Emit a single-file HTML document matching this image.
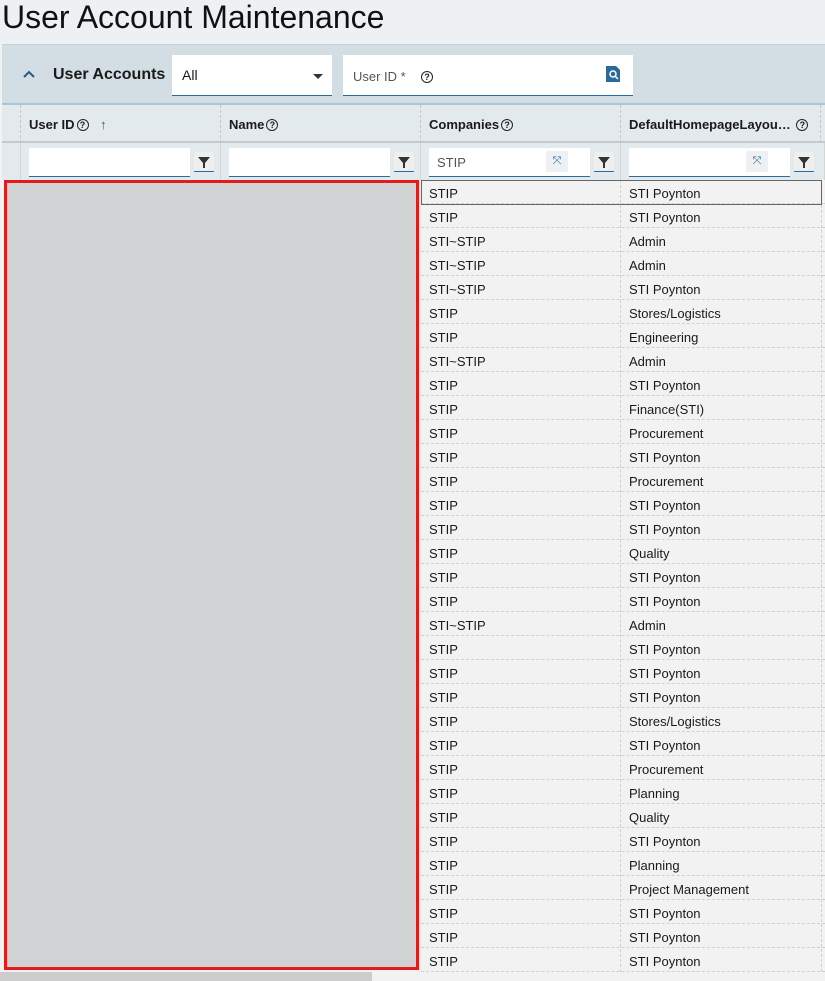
<!DOCTYPE html>
<html><head><style>
*{box-sizing:border-box;margin:0;padding:0}
body{width:825px;height:981px;overflow:hidden;background:#f2f2f2;font-family:"Liberation Sans",sans-serif;color:#1a1a1a;position:relative}
.abs{position:absolute}
.title{left:2px;top:-1px;font-size:32px;color:#111;letter-spacing:0px}
.top{left:0;top:0;width:825px;height:44px;background:#eef1f3}
.panel{left:2px;top:44px;width:823px;height:61px;background:#d2dee3;border-top:1px solid #c8d2d6;border-bottom:2px solid #aac6d6}
.inp{background:#fff;border-bottom:1px solid #2a6b9c}
.hdr{top:105px;height:38px;background:#e3eaed;border-right:1px dashed #c5c5c5;font-size:13px;font-weight:bold;padding:12px 0 0 8px;border-bottom:2px solid #c9c9c9}
.flt{top:143px;height:37px;background:#e3eaed;border-right:1px solid #d5d5d5}
.q{display:inline-block;width:12px;height:12px;border:1.3px solid #222;border-radius:50%;font-size:9px;line-height:10px;text-align:center;vertical-align:1px;margin-left:2px;font-weight:bold}
.fb{width:20px;height:20px;background:#eee;border-bottom:1px solid #2a6b9c}
.row{position:absolute;left:421px;width:404px;height:24px;font-size:13px;border-bottom:1px dashed #cfcfcf}
.row span{position:absolute;top:6px}
</style></head><body>
<div class="abs top"></div>
<div class="abs title">User Account Maintenance</div>
<div class="abs panel"></div>
<svg class="abs" style="left:22px;top:69px" width="14" height="10"><path d="M2 8 L7 3 L12 8" stroke="#2a5a80" stroke-width="2" fill="none"/></svg>
<div class="abs" style="left:53px;top:66px;font-size:16px;font-weight:bold">User Accounts</div>
<div class="abs inp" style="left:172px;top:55px;width:160px;height:41px"><span class="abs" style="left:10px;top:12px;font-size:14px">All</span><svg class="abs" style="left:140px;top:18px" width="12" height="8"><path d="M1 1H11L6 6Z" fill="#333"/></svg></div>
<div class="abs inp" style="left:343px;top:55px;width:290px;height:41px"><span class="abs" style="left:10px;top:14px;font-size:13px;color:#555">User ID *</span><span class="abs q" style="left:76px;top:16px">?</span><svg class="abs" style="left:263px;top:11px" width="14" height="16"><path d="M0 0H10L14 4V16H0Z" fill="#2a6b9c"/><circle cx="7" cy="8" r="3" fill="none" stroke="#fff" stroke-width="1.5"/><path d="M9 10L12 13" stroke="#fff" stroke-width="1.5"/></svg></div>

<div class="abs hdr" style="left:2px;width:19px;padding:0"></div>
<div class="abs hdr" style="left:21px;width:200px">User ID<span class="q">?</span> <span style="font-weight:normal;margin-left:8px;color:#555">↑</span></div>
<div class="abs hdr" style="left:221px;width:200px">Name<span class="q">?</span></div>
<div class="abs hdr" style="left:421px;width:200px">Companies<span class="q">?</span></div>
<div class="abs hdr" style="left:621px;width:200px">DefaultHomepageLayou… <span class="q">?</span></div>
<div class="abs hdr" style="left:821px;width:10px;padding:0"></div>

<div class="abs flt" style="left:2px;width:19px"></div>
<div class="abs flt" style="left:21px;width:200px"></div>
<div class="abs flt" style="left:221px;width:200px"></div>
<div class="abs flt" style="left:421px;width:200px"></div>
<div class="abs flt" style="left:621px;width:204px"></div>
<div class="abs inp" style="left:29px;top:148px;width:161px;height:29px"></div>
<div class="abs inp" style="left:229px;top:148px;width:161px;height:29px"></div>
<div class="abs inp" style="left:429px;top:148px;width:161px;height:29px"><span class="abs" style="left:8px;top:7px;font-size:13px;color:#555">STIP</span><div class="abs" style="left:117px;top:3px;width:22px;height:21px;background:#eef1f3;color:#2a6b9c;font-size:11px;text-align:center;line-height:21px">⤧</div></div>
<div class="abs inp" style="left:629px;top:148px;width:161px;height:29px"><div class="abs" style="left:117px;top:3px;width:22px;height:21px;background:#eef1f3;color:#2a6b9c;font-size:11px;text-align:center;line-height:21px">⤧</div></div>
<svg class="abs fb" style="left:194px;top:152px" width="20" height="20"><path d="M4 5H16L11 11V16H9V11Z" fill="#333"/></svg>
<svg class="abs fb" style="left:394px;top:152px" width="20" height="20"><path d="M4 5H16L11 11V16H9V11Z" fill="#333"/></svg>
<svg class="abs fb" style="left:594px;top:152px" width="20" height="20"><path d="M4 5H16L11 11V16H9V11Z" fill="#333"/></svg>
<svg class="abs fb" style="left:794px;top:152px" width="20" height="20"><path d="M4 5H16L11 11V16H9V11Z" fill="#333"/></svg>

<div class="abs" style="left:620px;top:180px;width:1px;height:792px;border-left:1px dashed #cfcfcf"></div>
<div class="abs" style="left:821px;top:180px;width:1px;height:792px;border-left:1px dashed #cfcfcf"></div>
<div id="rows"></div>
<div class="abs" style="left:421px;top:180px;width:401px;height:25px;border:1px solid #666"></div>
<div class="abs" style="left:4px;top:180px;width:415px;height:790px;background:#d1d2d4;border:3px solid #e21b1b"></div>
<div class="abs" style="left:0;top:972px;width:372px;height:9px;background:#cdcdcd"></div>
<script>
var d=["STIP|STI Poynton","STIP|STI Poynton","STI~STIP|Admin","STI~STIP|Admin","STI~STIP|STI Poynton","STIP|Stores/Logistics","STIP|Engineering","STI~STIP|Admin","STIP|STI Poynton","STIP|Finance(STI)","STIP|Procurement","STIP|STI Poynton","STIP|Procurement","STIP|STI Poynton","STIP|STI Poynton","STIP|Quality","STIP|STI Poynton","STIP|STI Poynton","STI~STIP|Admin","STIP|STI Poynton","STIP|STI Poynton","STIP|STI Poynton","STIP|Stores/Logistics","STIP|STI Poynton","STIP|Procurement","STIP|Planning","STIP|Quality","STIP|STI Poynton","STIP|Planning","STIP|Project Management","STIP|STI Poynton","STIP|STI Poynton","STIP|STI Poynton"];
var h="";d.forEach(function(r,i){var p=r.split("|");h+='<div class="row" style="top:'+(180+i*24)+'px"><span style="left:8px">'+p[0]+'</span><span style="left:208px">'+p[1]+'</span></div>';});
document.getElementById("rows").innerHTML=h;
</script>
</body></html>
